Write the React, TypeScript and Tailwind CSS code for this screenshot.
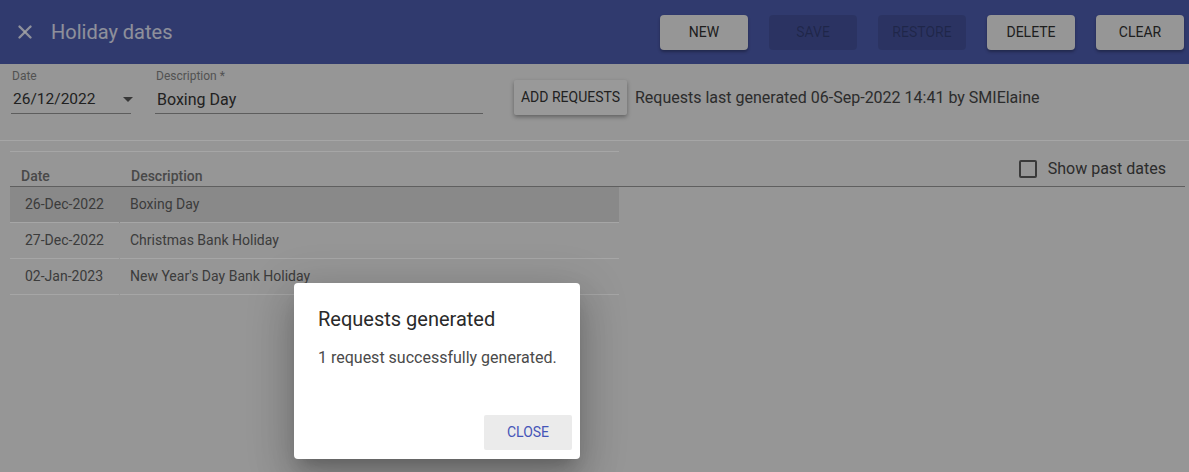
import { X } from "lucide-react"

const holidays = [
  { date: "26-Dec-2022", description: "Boxing Day", selected: true },
  { date: "27-Dec-2022", description: "Christmas Bank Holiday", selected: false },
  { date: "02-Jan-2023", description: "New Year's Day Bank Holiday", selected: false },
]

function HeaderButton({ label, disabled }: { label: string; disabled?: boolean }) {
  return (
    <button
      className={
        disabled
          ? "w-[88px] h-[35px] rounded-[4px] bg-black/10 text-black/25 text-[14px] uppercase"
          : "w-[88px] h-[35px] rounded-[4px] bg-[#e6e6e6] text-[#2e2e2e] text-[14px] uppercase shadow-[0_2px_3px_rgba(0,0,0,0.3)]"
      }
    >
      {label}
    </button>
  )
}

export default function App() {
  return (
    <div className="relative w-[1189px] h-[472px] overflow-hidden bg-[#e6e6e6] font-['Roboto',sans-serif]">
      <header className="h-16 bg-[#4a59a9] flex items-center pl-[14px] pr-[5px]">
        <X className="w-[22px] h-[22px] text-white/80" strokeWidth={2.6} />
        <h1 className="ml-[15px] text-[20px] text-white/80">Holiday dates</h1>
        <div className="ml-auto flex gap-[21px]">
          <HeaderButton label="New" />
          <HeaderButton label="Save" disabled />
          <HeaderButton label="Restore" disabled />
          <HeaderButton label="Delete" />
          <HeaderButton label="Clear" />
        </div>
      </header>

      <div className="h-[77px] border-b border-white flex items-start pl-[11px] pt-[5px]">
        <div className="w-[120px]">
          <div className="text-[12px] leading-[14px] text-[#7f7f7f] pl-[1px]">Date</div>
          <div className="mt-[7px] h-[24px] flex items-start justify-between border-b border-[#8f8f8f] pl-[2px]">
            <span className="text-[15.5px] leading-[19px] text-[#333]">26/12/2022</span>
            <svg width="10" height="5" viewBox="0 0 10 5" className="mt-[7px] mr-[-2px]">
              <path d="M0 0 L10 0 L5 5 Z" fill="#555" />
            </svg>
          </div>
        </div>
        <div className="w-[328px] ml-[24px]">
          <div className="text-[12px] leading-[14px] text-[#7f7f7f] pl-[1px]">Description *</div>
          <div className="mt-[7px] h-[24px] flex items-start border-b border-[#8f8f8f] pl-[2px]">
            <span className="text-[16px] leading-[19px] text-[#333]">Boxing Day</span>
          </div>
        </div>
        <button className="ml-[31px] mt-[11px] w-[113px] h-[35px] rounded-[2px] bg-[#ebebeb] text-[14px] text-[#333] uppercase shadow-[0_2px_4px_rgba(0,0,0,0.35)]">
          Add requests
        </button>
        <span className="ml-[8px] mt-[19px] text-[16px] leading-[19px] text-[#444]">
          Requests last generated 06-Sep-2022 14:41 by SMIElaine
        </span>
      </div>

      <div className="ml-[10px] mr-[4px] mt-[10px]">
        <div className="flex border-b border-[#939393]">
          <div className="w-[609px] h-[35px] border-t border-white flex items-end pb-[2px] text-[14px] leading-[16px] font-medium text-[#707070]">
            <div className="w-[110px] pl-[11px]">Date</div>
            <div className="pl-[11px]">Description</div>
          </div>
          <div className="flex-1 flex items-center justify-end pr-[19px] pt-[1px]">
            <span className="w-[18px] h-[18px] rounded-[2px] border-2 border-[#5a5a5a]" />
            <span className="ml-[11px] text-[16px] text-[#444]">Show past dates</span>
          </div>
        </div>
        <div className="w-[609px]">
          {holidays.map((h) => (
            <div key={h.date} className={`flex h-[36px] text-[14px] text-[#5c5c5c] ${h.selected ? "bg-[#d3d3d3]" : ""}`}>
              <div className="w-[109px] border-b border-white flex items-center pl-[15px]">{h.date}</div>
              <div className="ml-[1px] flex-1 border-b border-white flex items-center pl-[10px]">{h.description}</div>
            </div>
          ))}
        </div>
      </div>

      <div className="absolute inset-0 bg-black/[0.35]" />

      <div className="absolute left-[294px] top-[283px] w-[286px] h-[176px] rounded-[4px] bg-white shadow-[0_11px_15px_-7px_rgba(0,0,0,0.2),0_24px_38px_3px_rgba(0,0,0,0.14),0_9px_46px_8px_rgba(0,0,0,0.12)] flex flex-col">
        <h2 className="pl-[24px] pt-[24px] text-[20px] leading-[24px] text-[#2a2a2a]">Requests generated</h2>
        <p className="pl-[24px] mt-[17px] text-[16px] leading-[20px] text-[#4a4a4a]">1 request successfully generated.</p>
        <div className="mt-auto flex justify-end pr-[8px] pb-[9px]">
          <button className="w-[88px] h-[35px] rounded-[2px] bg-[#ebebeb] text-[14px] uppercase text-[#4555b8]">
            Close
          </button>
        </div>
      </div>
    </div>
  )
}
